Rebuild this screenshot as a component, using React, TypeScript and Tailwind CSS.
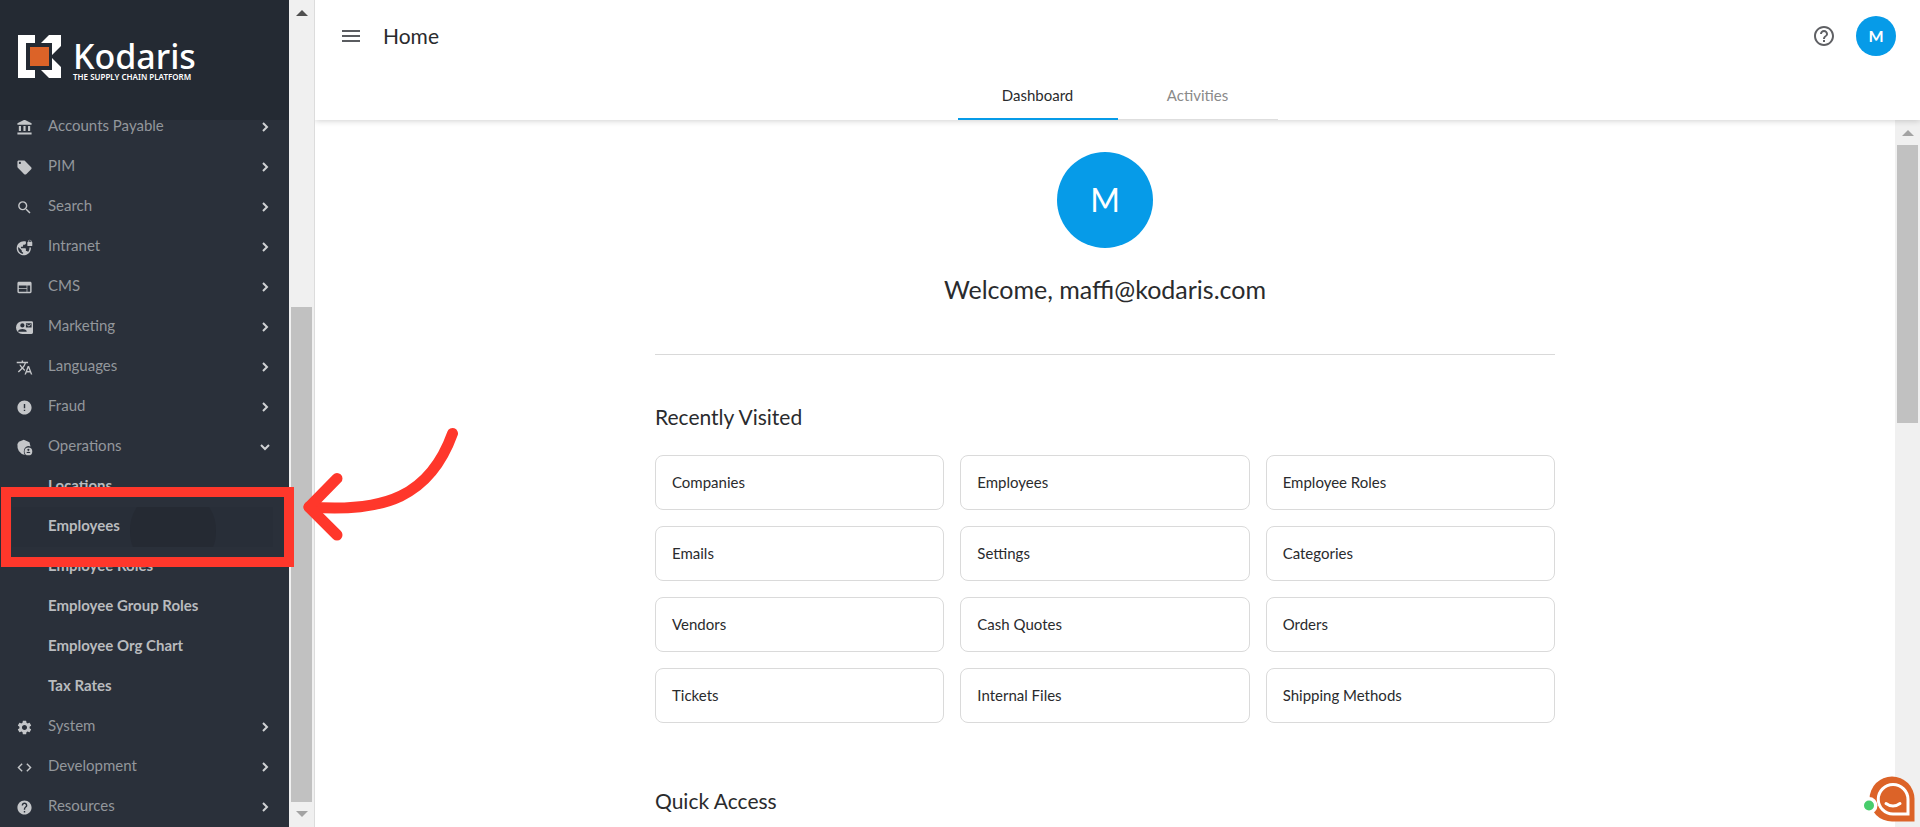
import React from "react";
import {
  MdAccountBalance,
  MdCode,
  MdError,
  MdHelp,
  MdHelpOutline,
  MdLocalOffer,
  MdMenu,
  MdSearch,
  MdSettings,
  MdTranslate,
  MdVpnLock,
  MdWeb,
} from "react-icons/md";

type IconProps = { className?: string };
type Section = { label: string; icon: React.ComponentType<IconProps>; children?: string[] };

function ContactCardIcon({ className }: IconProps) {
  return (
    <svg viewBox="0 0 24 24" className={className} fill="currentColor" aria-hidden="true">
      <path
        fillRule="evenodd"
        d="M9 3H22A2 2 0 0 1 24 5V19A2 2 0 0 1 22 21H9A9 9 0 0 1 9 3ZM14 6V12H22V6ZM9 6A3 3 0 1 0 9 12A3 3 0 1 0 9 6ZM3 18H15V17C15 15 11 14 9 14S3 15 3 17Z"
      />
      <path d="M15 7L18 9L21 7V8.200L18 10.500L15 8.200Z" />
    </svg>
  );
}

function OperationsIcon({ className }: IconProps) {
  return (
    <svg viewBox="0 0 24 24" className={className} fill="currentColor" aria-hidden="true">
      <path d="M11 1L19 4.500L20.500 10.500A7 7 0 0 0 11 17.500Q11 20.500 12.500 22.500Q7 21.500 4 17Q1.500 13 2 7L4 4Z" />
      <path
        fillRule="evenodd"
        d="M17.500 12A5.500 5.500 0 1 1 17.500 23A5.500 5.500 0 1 1 17.500 12ZM17.500 13.800A1.500 1.500 0 1 0 17.500 16.800A1.500 1.500 0 1 0 17.500 13.800ZM14.500 19.800H20.500Q19.500 18 17.500 18T14.500 19.800Z"
      />
    </svg>
  );
}

const sections: Section[] = [
  { label: "Accounts Payable", icon: MdAccountBalance },
  { label: "PIM", icon: MdLocalOffer },
  { label: "Search", icon: MdSearch },
  { label: "Intranet", icon: MdVpnLock },
  { label: "CMS", icon: MdWeb },
  { label: "Marketing", icon: ContactCardIcon },
  { label: "Languages", icon: MdTranslate },
  { label: "Fraud", icon: MdError },
  {
    label: "Operations",
    icon: OperationsIcon,
    children: [
      "Locations",
      "Employees",
      "Employee Roles",
      "Employee Group Roles",
      "Employee Org Chart",
      "Tax Rates",
    ],
  },
  { label: "System", icon: MdSettings },
  { label: "Development", icon: MdCode },
  { label: "Resources", icon: MdHelp },
];

const recent = [
  "Companies",
  "Employees",
  "Employee Roles",
  "Emails",
  "Settings",
  "Categories",
  "Vendors",
  "Cash Quotes",
  "Orders",
  "Tickets",
  "Internal Files",
  "Shipping Methods",
];

function Logo() {
  return (
    <a href="#" aria-label="Kodaris" className="flex items-start gap-3 text-white">
      <svg viewBox="0 0 43 43" className="size-[43px]" fill="currentColor" aria-hidden="true">
        <path d="M0 0H17V8H8V35H17V43H0Z" />
        <path d="M31 0H43V11L34 20V8H23Z" />
        <path d="M34 23L43 32V43H31L23 35H34Z" />
        <rect x="12" y="12" width="19" height="19" fill="#dc6328" />
      </svg>
      <span className="flex flex-col pt-1 font-['Noto_Sans',sans-serif]">
        <span className="text-[34px] leading-[34px] font-medium">Kodaris</span>
        <span className="text-[8px] leading-2 font-semibold">THE SUPPLY CHAIN PLATFORM</span>
      </span>
    </a>
  );
}

function NavSection({ label, icon: Icon, children }: Section) {
  return (
    <li>
      <button
        type="button"
        aria-expanded={Boolean(children)}
        className="flex h-10 w-full items-center px-4 text-left text-[15px] text-[#93979c]"
      >
        <Icon className="size-[17px] shrink-0 text-[#c4c6c9]" />
        <span className="flex-1 pb-1 pl-[15px]">{label}</span>
        <svg
          viewBox="0 0 16 16"
          className="size-4 shrink-0"
          fill="none"
          stroke="#d0d2d4"
          strokeWidth="2"
          aria-hidden="true"
        >
          <path d={children ? "M4 6L8 10L12 6" : "M6 4L10 8L6 12"} />
        </svg>
      </button>
      {children && (
        <ul>
          {children.map((child) => (
            <li key={child} className="relative">
              {child === "Employees" && (
                <span className="absolute inset-y-0 right-4 left-3 bg-[#282e38]">
                  <svg viewBox="0 0 86 40" className="ml-[118px] h-10 w-[86px]" aria-hidden="true">
                    <path d="M7 0H79Q86 10 86 24Q86 34 83 40H3Q0 34 0 24Q0 10 7 0Z" fill="#252a33" />
                  </svg>
                </span>
              )}
              <a
                href="#"
                className="relative flex h-10 items-center pb-1 pl-12 text-[15px] font-bold text-[#b9bbbe]"
              >
                {child}
              </a>
              {child === "Employees" && <Callout />}
            </li>
          ))}
        </ul>
      )}
    </li>
  );
}

function Callout() {
  return (
    <>
      <span className="pointer-events-none absolute -top-5 left-px z-20 h-20 w-[293px] border-10 border-[#ff372b]" />
      <svg
        viewBox="0 0 160 120"
        className="pointer-events-none absolute -top-[81px] left-[300px] z-20 h-[120px] w-40"
        fill="none"
        stroke="#ff372b"
        strokeWidth="11"
        strokeLinecap="round"
        strokeLinejoin="round"
        aria-hidden="true"
      >
        <path d="M152.500 7.500C130 70 85 87 9 81" />
        <path d="M37 52.500L9 81L37 109" />
      </svg>
    </>
  );
}

function Arrow({ className, down }: { className: string; down?: boolean }) {
  return (
    <svg viewBox="0 0 12 6" className={`h-1.5 w-3 ${className}`} fill="currentColor" aria-hidden="true">
      <path d={down ? "M0 0H12L6 6Z" : "M0 6L6 0L12 6Z"} />
    </svg>
  );
}

export default function App() {
  return (
    <div className="flex h-screen overflow-hidden bg-white font-['Lato',sans-serif] text-[#2a2b2d]">
      <aside className="relative z-10 flex shrink-0 border-r border-[#dcdcdc]">
        <div className="flex w-[289px] flex-col bg-[#2a303a]">
          <div className="z-10 h-[120px] shrink-0 bg-[#242a33] px-[18px] py-[35px]">
            <Logo />
          </div>
          <nav className="flex min-h-0 flex-1 flex-col justify-end [clip-path:inset(0_-200px_0_0)]">
            <ul>
              {sections.map((section) => (
                <NavSection key={section.label} {...section} />
              ))}
            </ul>
          </nav>
        </div>
        <div className="flex w-[25px] flex-col items-center bg-[#f0f0f0] py-2.5">
          <Arrow className="text-[#505050]" />
          <div className="min-h-0 flex-[97]" />
          <div className="w-[21px] flex-[165] bg-[#c1c1c1]" />
          <div className="h-[9px]" />
          <Arrow down className="text-[#a3a3a3]" />
        </div>
      </aside>

      <div className="flex min-w-0 flex-1 flex-col">
        <header className="z-[5] flex h-[120px] shrink-0 flex-col justify-between bg-white shadow-[0_1px_6px_rgba(0,0,0,0.18)]">
          <div className="flex h-[72px] items-center px-6">
            <button type="button" aria-label="Menu" className="text-[#5a5c60]">
              <MdMenu className="size-6" />
            </button>
            <h1 className="flex-1 pl-5 text-[21px] leading-7">Home</h1>
            <button type="button" aria-label="Help" className="text-[#5f6064]">
              <MdHelpOutline className="size-6" />
            </button>
            <button
              type="button"
              aria-label="Account"
              className="ml-5 size-10 rounded-full bg-[#069be8] text-base font-bold text-white"
            >
              M
            </button>
          </div>
          <nav className="flex justify-center text-[15px]">
            <a
              href="#"
              className="flex h-12 w-40 items-center justify-center border-b-2 border-[#069be8]"
            >
              Dashboard
            </a>
            <a
              href="#"
              className="flex h-12 w-40 items-center justify-center border-b border-[#dedede] text-[#8a8a8a]"
            >
              Activities
            </a>
          </nav>
        </header>

        <div className="flex min-h-0 flex-1">
          <main className="min-w-0 flex-1 overflow-hidden">
            <div className="mx-auto max-w-[900px] pt-8">
              <div className="flex flex-col items-center border-b border-[#d9d9d9] pb-12">
                <div className="flex size-24 items-center justify-center rounded-full bg-[#069be8] text-[32px] text-white">
                  M
                </div>
                <h2 className="pt-6 text-[25px] leading-[34px]">Welcome, maffi@kodaris.com</h2>
              </div>
              <section>
                <h3 className="pt-12 text-[21px] leading-7">Recently Visited</h3>
                <div className="grid grid-cols-3 gap-4 pt-6">
                  {recent.map((item) => (
                    <a
                      key={item}
                      href="#"
                      className="flex h-[55px] items-center rounded-lg border border-[#dadada] px-4 text-[15px]"
                    >
                      {item}
                    </a>
                  ))}
                </div>
              </section>
              <section>
                <h3 className="pt-16 text-[21px] leading-7">Quick Access</h3>
              </section>
            </div>
          </main>
          <div className="flex w-[25px] shrink-0 flex-col items-center bg-[#f0f0f0] pt-2.5">
            <Arrow className="text-[#a3a3a3]" />
            <div className="mt-[9px] h-[278px] w-[21px] bg-[#c1c1c1]" />
          </div>
        </div>
      </div>

      <button type="button" aria-label="Open chat" className="fixed right-[5px] bottom-[5px] z-20">
        <svg viewBox="0 0 52 46" className="h-[46px] w-[52px]" aria-hidden="true">
          <path d="M29 0.500A22.500 22.500 0 0 1 51.500 23V45.500H29A22.500 22.500 0 0 1 29 0.500Z" fill="#dc6328" />
          <circle cx="6" cy="29.500" r="8.500" fill="#fff" />
          <circle cx="6" cy="29.500" r="5" fill="#48cd6c" />
          <path
            d="M30 8.500A15 15 0 0 1 45 23.500V38H30A14.750 14.750 0 0 1 30 8.500Z"
            fill="none"
            stroke="#fff"
            strokeWidth="3"
          />
          <path d="M23 27.500Q30 32.500 37 27.500" fill="none" stroke="#fff" strokeWidth="3" strokeLinecap="round" />
        </svg>
      </button>
    </div>
  );
}
